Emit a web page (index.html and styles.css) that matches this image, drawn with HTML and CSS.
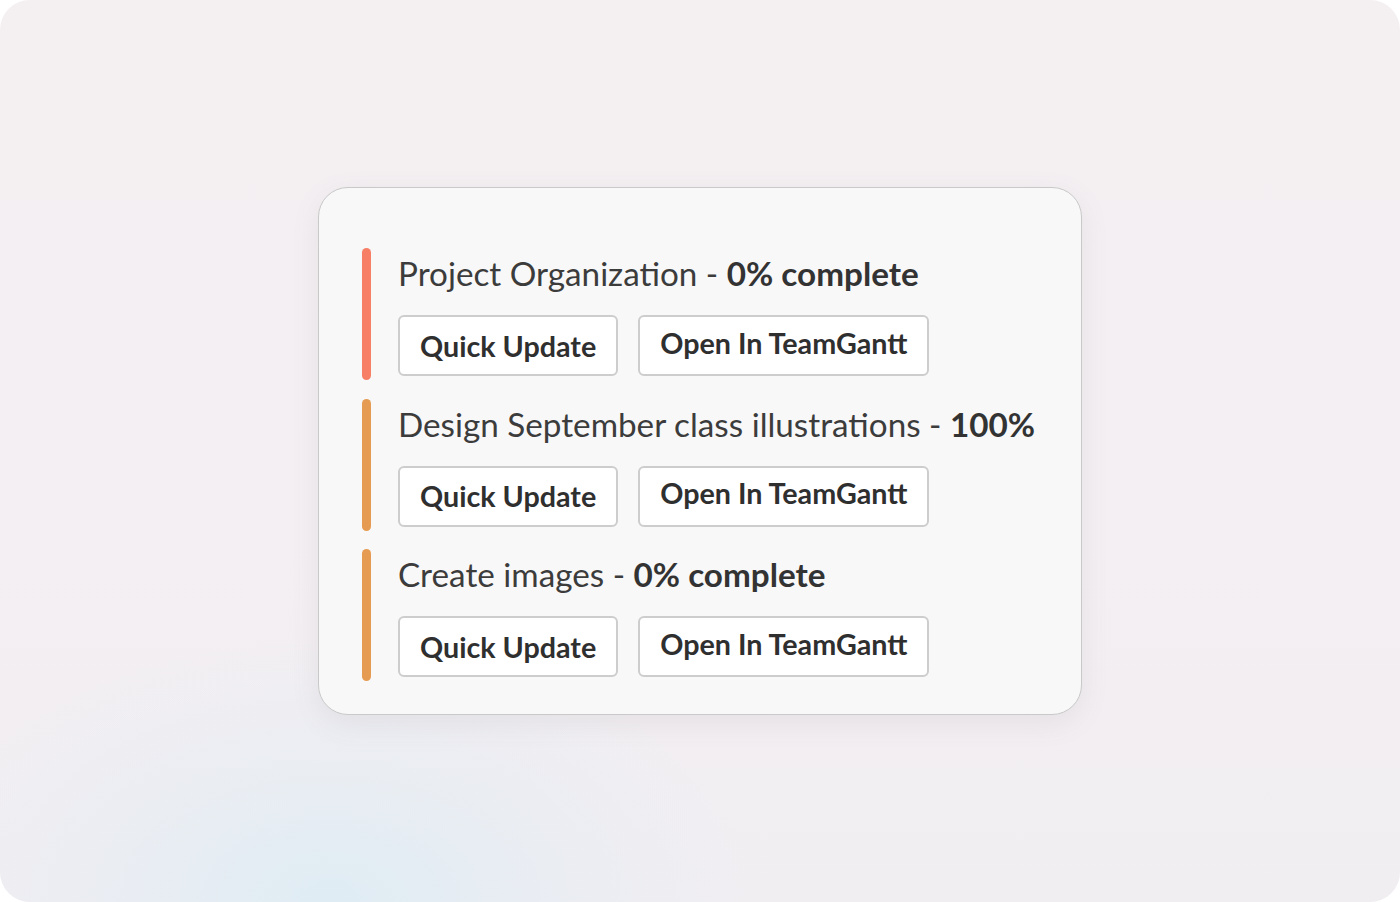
FILE: index.html
```
<!DOCTYPE html>
<html lang="en">
<head>
<meta charset="utf-8">
<title>TeamGantt tasks</title>
<link rel="stylesheet" href="styles.css">
</head>
<body>
<div class="frame">
  <div class="card">
    <div class="task">
      <div class="bar bar-red"></div>
      <div class="content">
        <div class="title">Project Organization - <b>0% complete</b></div>
        <div class="actions">
          <button class="btn">Quick Update</button>
          <button class="btn btn-open">Open In TeamGantt</button>
        </div>
      </div>
    </div>
    <div class="task">
      <div class="bar bar-orange"></div>
      <div class="content">
        <div class="title">Design September class illustrations - <b>100%</b></div>
        <div class="actions">
          <button class="btn">Quick Update</button>
          <button class="btn btn-open">Open In TeamGantt</button>
        </div>
      </div>
    </div>
    <div class="task">
      <div class="bar bar-orange"></div>
      <div class="content">
        <div class="title">Create images - <b>0% complete</b></div>
        <div class="actions">
          <button class="btn">Quick Update</button>
          <button class="btn btn-open">Open In TeamGantt</button>
        </div>
      </div>
    </div>
  </div>
</div>
</body>
</html>
```
FILE: styles.css
```
html, body {
  margin: 0;
  padding: 0;
  background: #ffffff;
}
body {
  font-family: Lato, "Open Sans", sans-serif;
}
.frame {
  width: 1400px;
  height: 902px;
  border-radius: 30px;
  overflow: hidden;
  display: flex;
  align-items: center;
  justify-content: center;
  background:
    radial-gradient(ellipse 420px 260px at 330px 900px, rgba(222, 236, 244, 0.95) 0%, rgba(226, 236, 243, 0.5) 50%, rgba(236, 236, 242, 0) 100%),
    linear-gradient(180deg, #f4f0f2 0%, #f3eff2 60%, #f1eef2 100%);
}
.card {
  box-sizing: border-box;
  width: 764px;
  height: 528px;
  padding: 60px 40px 33px 43px;
  background: #f8f8f8;
  border: 1px solid #c9c9c9;
  border-radius: 30px;
  box-shadow: 0 8px 28px rgba(120, 110, 120, 0.10);
  display: flex;
  flex-direction: column;
  gap: 18.5px;
}
.task {
  display: flex;
  height: 132px;
}
.bar {
  width: 9px;
  height: 132px;
  border-radius: 5px;
  flex-shrink: 0;
}
.bar-red { background: #f67f66; }
.bar-orange { background: #e69b53; }
.content {
  margin-left: 27px;
  display: flex;
  flex-direction: column;
}
.title {
  margin-top: 5px;
  font-size: 33.25px;
  line-height: 40px;
  color: #3c3c3c;
  white-space: nowrap;
}
.title b {
  font-weight: 700;
  color: #333333;
}
.actions {
  margin-top: 22px;
  display: flex;
  gap: 20px;
}
.btn {
  box-sizing: border-box;
  height: 61px;
  padding: 0 20px;
  background: #ffffff;
  border: 2px solid #cdcdcd;
  border-radius: 6px;
  font-family: Lato, "Open Sans", sans-serif;
  font-weight: 700;
  font-size: 28.7px;
  color: #2f2f2f;
  display: flex;
  align-items: center;
}
.btn-open {
  padding-bottom: 6px;
}
```
